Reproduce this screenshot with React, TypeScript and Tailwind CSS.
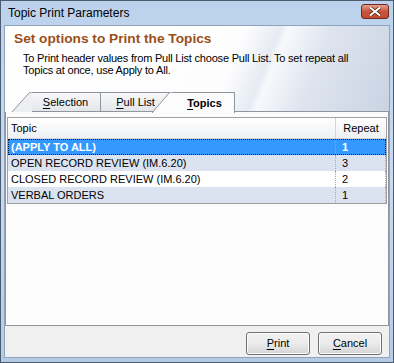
import React from 'react';

const FONT = { fontFamily: '"Liberation Sans", Arial, sans-serif' };

const rows = [
  { topic: '(APPLY TO ALL)', repeat: '1' },
  { topic: 'OPEN RECORD REVIEW (IM.6.20)', repeat: '3' },
  { topic: 'CLOSED RECORD REVIEW (IM.6.20)', repeat: '2' },
  { topic: 'VERBAL ORDERS', repeat: '1' },
];

function Mnemonic({ text, bold = false }: { text: string; bold?: boolean }) {
  return (
    <span className={bold ? 'font-bold' : ''}>
      <span className="underline underline-offset-2">{text[0]}</span>
      {text.slice(1)}
    </span>
  );
}

function Tab({
  label,
  active = false,
  width,
  slant = true,
}: {
  label: string;
  active?: boolean;
  width: number;
  slant?: boolean;
}) {
  // slanted left edge drawn as a small svg, body is a flex box
  const h = active ? 21 : 20;
  return (
    <div className="relative flex items-end" style={{ width }}>
      {slant && (
        <svg
          width="20"
          height={h}
          viewBox={`0 0 20 ${h}`}
          className="absolute bottom-0 -left-[19px]"
        >
          <path
            d={`M0 ${h} L17 1 Q18 0 20 0 L20 ${h} Z`}
            fill={active ? '#fcfcfd' : '#eeeff1'}
          />
          <path d={`M0 ${h} L17 1 Q18 0 20 0`} fill="none" stroke="#8e959f" strokeWidth="1" />
        </svg>
      )}
      <div
        className={`flex w-full items-center justify-center border-t border-r border-[#8e959f] text-[11px] text-black ${
          active
            ? 'h-[21px] bg-[#fcfcfd] pl-1'
            : 'h-[20px] border-b bg-gradient-to-b from-[#f8f8f9] to-[#e4e6ea]'
        }`}
      >
        <Mnemonic text={label} bold={active} />
      </div>
    </div>
  );
}

function Button({ label }: { label: string }) {
  return (
    <button className="flex h-[23px] w-[64px] items-center justify-center rounded-[3px] border border-[#707070] bg-gradient-to-b from-[#f2f2f2] via-[#ebebeb] to-[#d4d4d4] text-[11px] text-black shadow-[inset_0_0_0_1px_#fcfcfc]">
      <Mnemonic text={label} />
    </button>
  );
}

export default function App() {
  return (
    <div
      className="relative flex h-[363px] w-[394px] flex-col overflow-hidden border border-[#4d5b6e] bg-gradient-to-b from-[#bcd2ec] via-[#c9dbf0] to-[#b4cbe6]"
      style={FONT}
    >
      {/* title bar */}
      <div className="flex h-[24px] shrink-0 items-center pl-[7px] text-[12px] text-black">
        Topic Print Parameters
      </div>
      <div className="absolute right-[4px] top-[3px] flex h-[15px] w-[28px] items-center justify-center rounded-[3px] border border-[#6d2b24] bg-gradient-to-b from-[#e4a08e] via-[#c8543d] to-[#c44a2e]">
        <svg width="12" height="9" viewBox="0 0 12 9">
          <path d="M1 0.5 L11 8.5 M11 0.5 L1 8.5" stroke="#5a1f14" strokeWidth="3.4" />
          <path d="M1 0.5 L11 8.5 M11 0.5 L1 8.5" stroke="#ffffff" strokeWidth="2" />
        </svg>
      </div>

      {/* client */}
      <div className="mx-[3px] mb-[4px] flex flex-1 flex-col border border-[#8fa3bd] bg-[#f0f0f0]">
        {/* header band */}
        <div className="flex flex-col bg-[linear-gradient(112deg,#ffffff_0%,#fdfdfe_58%,#e6ebf3_66%,#f7f9fc_68%,#dfe5ef_78%,#c9d3e3_100%)]">
          <div className="ml-[4px] mt-[2px] flex h-[22px] w-[214px] items-center rounded-[5px] bg-white pl-[5px] text-[13.7px] font-bold text-[#9b4f1a]">
            Set options to Print the Topics
          </div>
          <div className="ml-[18px] mt-[2px] text-[11px] leading-[12px] text-black tracking-[-0.2px]">
            To Print header values from Pull List choose Pull List. To set repeat all
            <br />
            Topics at once, use Apply to All.
          </div>
          {/* tab strip */}
          <div className="mt-[11px] flex h-[25px] items-end pl-[26px]">
            <Tab label="Selection" width={70} />
            <Tab label="Pull List" width={70} slant={false} />
            <div className="relative z-10 -mb-px">
              <Tab label="Topics" width={64} active />
            </div>
            <div className="h-px flex-1 bg-[#8e959f]" />
          </div>
        </div>

        {/* tab page */}
        <div className="mx-0 flex h-[214px] flex-col border-x border-b border-[#8e959f] bg-[#fcfcfd] px-[1px] pt-[5px]">
          <div className="flex flex-col border border-[#a0a0a0] bg-white">
            <div className="flex h-[21px] bg-gradient-to-b from-[#ffffff] to-[#eef0f3] text-[11px] text-black border-b border-[#d5d5d5]">
              <div className="flex flex-1 items-center pl-[3px] border-r border-[#d5d5d5]">Topic</div>
              <div className="flex w-[50px] items-center justify-center">Repeat</div>
            </div>
            {rows.map((r, i) => {
              const selected = i === 0;
              const bg = selected ? 'bg-[#3399ff] text-white font-bold' : i % 2 === 1 ? 'bg-[#dce3f0] text-black' : 'bg-white text-black';
              return (
                <div
                  key={r.topic}
                  className={`flex h-[16px] text-[11px] ${bg} ${
                    selected ? 'outline-1 outline-dotted outline-offset-[-1px] outline-[#1a1a1a]' : ''
                  }`}
                >
                  <div className="flex flex-1 items-center pl-[3px] border-r border-dotted border-[#a9a9a9]">{r.topic}</div>
                  <div className="flex w-[50px] items-center pl-[6px] border-r border-dotted border-[#a9a9a9]">{r.repeat}</div>
                </div>
              );
            })}
          </div>
        </div>

        {/* buttons */}
        <div className="flex flex-1 items-center justify-end gap-[8px] pr-[7px] pt-[3px]">
          <Button label="Print" />
          <Button label="Cancel" />
        </div>
      </div>
    </div>
  );
}
